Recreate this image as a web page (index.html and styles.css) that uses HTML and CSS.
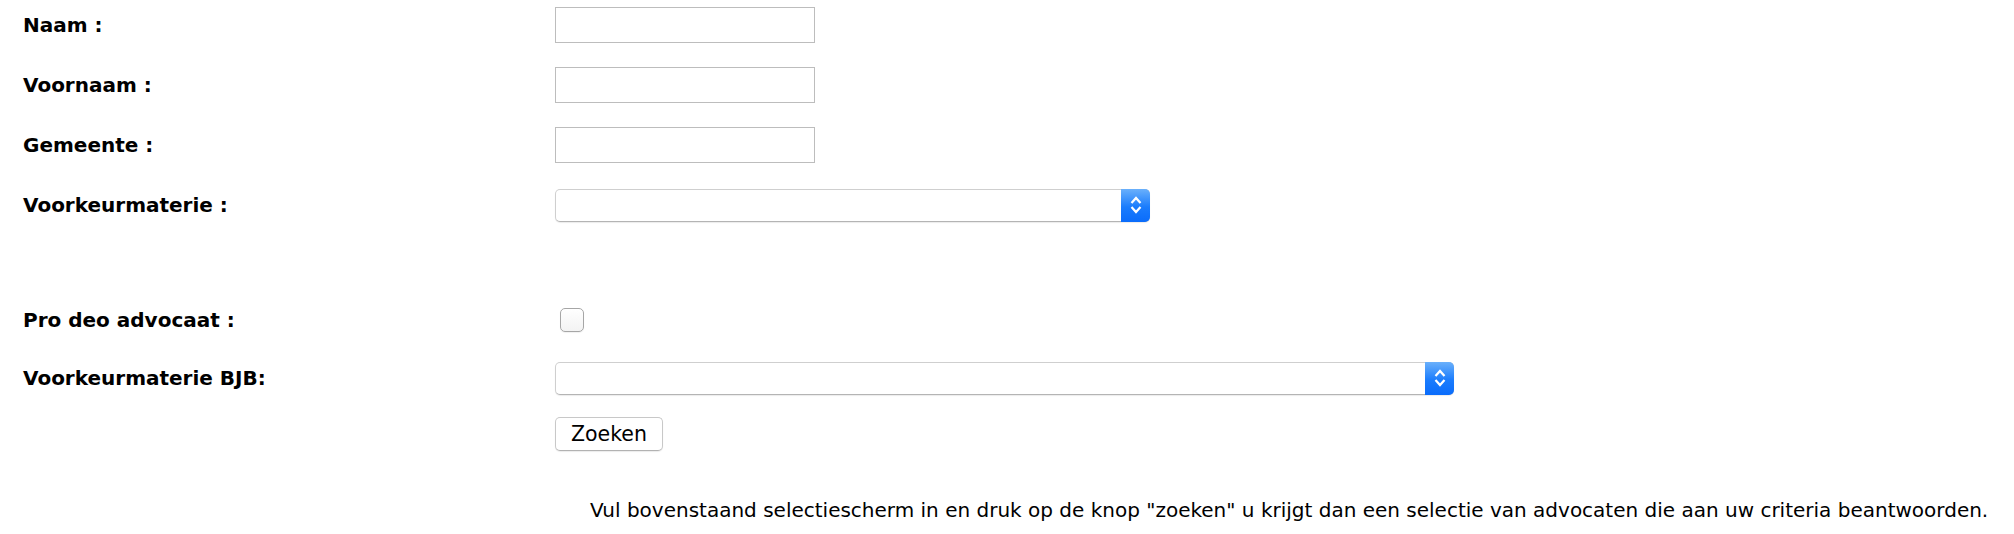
FILE: index.html
```html
<!DOCTYPE html>
<html lang="nl">
<head>
<meta charset="utf-8">
<title>Zoeken advocaat</title>
<link rel="stylesheet" href="styles.css">
</head>
<body>
<form class="search-form">
  <div class="row">
    <label class="label" for="naam">Naam :</label>
    <input class="text-input" id="naam" type="text">
  </div>
  <div class="row">
    <label class="label" for="voornaam">Voornaam :</label>
    <input class="text-input" id="voornaam" type="text">
  </div>
  <div class="row">
    <label class="label" for="gemeente">Gemeente :</label>
    <input class="text-input" id="gemeente" type="text">
  </div>
  <div class="row">
    <label class="label" for="materie">Voorkeurmaterie :</label>
    <span class="select-wrap select-wrap--short">
      <select class="select" id="materie"><option></option></select>
      <span class="stepper">
        <svg width="14" height="24" viewBox="0 0 14 24"><path d="M2.5 10 L7 5 L11.5 10" fill="none" stroke="#fff" stroke-width="2.2"/><path d="M2.5 14 L7 19 L11.5 14" fill="none" stroke="#fff" stroke-width="2.2"/></svg>
      </span>
    </span>
  </div>
  <div class="row row--check">
    <label class="label" for="prodeo">Pro deo advocaat :</label>
    <input class="checkbox" id="prodeo" type="checkbox">
  </div>
  <div class="row row--bjb">
    <label class="label" for="bjb">Voorkeurmaterie BJB:</label>
    <span class="select-wrap select-wrap--long">
      <select class="select" id="bjb"><option></option></select>
      <span class="stepper">
        <svg width="14" height="24" viewBox="0 0 14 24"><path d="M2.5 10 L7 5 L11.5 10" fill="none" stroke="#fff" stroke-width="2.2"/><path d="M2.5 14 L7 19 L11.5 14" fill="none" stroke="#fff" stroke-width="2.2"/></svg>
      </span>
    </span>
  </div>
  <div class="row row--button">
    <span class="label"></span>
    <button class="button" type="button">Zoeken</button>
  </div>
  <div class="row row--info">
    <span class="label"></span>
    <p class="info">Vul bovenstaand selectiescherm in en druk op de knop "zoeken" u krijgt dan een selectie van advocaten die aan uw criteria beantwoorden.</p>
  </div>
</form>
</body>
</html>
```

FILE: styles.css
```css
html, body {
  margin: 0;
  padding: 0;
  background: #ffffff;
}

body {
  font-family: "DejaVu Sans", Verdana, sans-serif;
  color: #000;
}

.search-form {
  display: flex;
  flex-direction: column;
  padding: 7px 0 0 23px;
}

.row {
  display: flex;
  align-items: center;
  height: 36px;
  margin-bottom: 24px;
}

.row--check {
  margin-top: 55px;
  margin-bottom: 22px;
}

.row--bjb {
  margin-bottom: 20px;
}

.row--button {
  margin-bottom: 0;
}

.row--info {
  margin-top: 43px;
  height: 30px;
}

.label {
  flex: 0 0 532px;
  font-weight: bold;
  font-size: 20px;
  line-height: 24px;
}

.text-input {
  box-sizing: border-box;
  width: 260px;
  height: 36px;
  margin: 0;
  border: 1px solid #bdbdbd;
  border-radius: 0;
  background: #fff;
  font: 19.5px "DejaVu Sans", sans-serif;
  padding: 0 4px;
  outline: none;
}

.select-wrap {
  position: relative;
  display: block;
  height: 33px;
}

.select-wrap--short { width: 595px; }
.select-wrap--long { width: 899px; }

.select {
  -webkit-appearance: none;
  appearance: none;
  box-sizing: border-box;
  width: 100%;
  height: 33px;
  margin: 0;
  border: 1px solid #cfcfcf;
  border-bottom-color: #b4b4b4;
  border-radius: 5px;
  background: #fff;
  box-shadow: 0 1px 1px rgba(0, 0, 0, 0.08);
  font: 19.5px "DejaVu Sans", sans-serif;
  outline: none;
}

.stepper {
  position: absolute;
  top: 0;
  right: 0;
  width: 29px;
  height: 33px;
  border-radius: 0 5px 5px 0;
  background: linear-gradient(#6ab0fb, #1a7cfd 55%, #0a6cfb);
  display: flex;
  align-items: center;
  justify-content: center;
}

.stepper svg {
  display: block;
}

.checkbox {
  -webkit-appearance: none;
  appearance: none;
  box-sizing: border-box;
  width: 24px;
  height: 24px;
  margin: 0 0 0 5px;
  border: 1px solid #a6a6a6;
  border-radius: 5px;
  background: linear-gradient(#ffffff, #f3f3f3);
  box-shadow: 0 1px 1px rgba(0, 0, 0, 0.06);
}

.button {
  box-sizing: border-box;
  width: 108px;
  height: 34px;
  margin: 0;
  padding: 0;
  border: 1px solid #c8c8c8;
  border-bottom-color: #b2b2b2;
  border-radius: 5px;
  background: #fff;
  box-shadow: 0 1px 1px rgba(0, 0, 0, 0.08);
  font: 20.5px "DejaVu Sans", sans-serif;
  color: #000;
}

.info {
  margin: 0 0 0 35px;
  font-size: 20px;
  line-height: 24px;
  white-space: nowrap;
}
```
